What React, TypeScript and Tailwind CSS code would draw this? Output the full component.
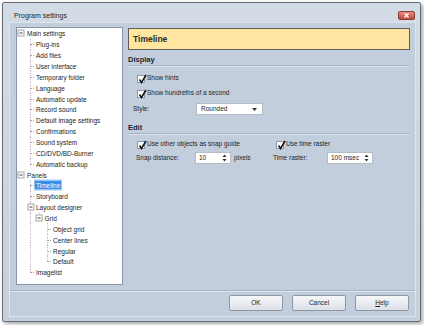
import React from "react";

type Row = { t: string; l: number; exp?: boolean; last?: boolean; sel?: boolean; g?: number[] };

const ROWS: Row[] = [
  { t: "Main settings", l: 0, exp: true },
  { t: "Plug-ins", l: 1 },
  { t: "Add files", l: 1 },
  { t: "User interface", l: 1 },
  { t: "Temporary folder", l: 1 },
  { t: "Language", l: 1 },
  { t: "Automatic update", l: 1 },
  { t: "Record sound", l: 1 },
  { t: "Default image settings", l: 1 },
  { t: "Confirmations", l: 1 },
  { t: "Sound system", l: 1 },
  { t: "CD/DVD/BD-Burner", l: 1 },
  { t: "Automatic backup", l: 1, last: true },
  { t: "Panels", l: 0, exp: true },
  { t: "Timeline", l: 1, sel: true },
  { t: "Storyboard", l: 1 },
  { t: "Layout designer", l: 1, exp: true },
  { t: "Grid", l: 2, exp: true, last: true, g: [1] },
  { t: "Object grid", l: 3, g: [1] },
  { t: "Center lines", l: 3, g: [1] },
  { t: "Regular", l: 3, g: [1] },
  { t: "Default", l: 3, last: true, g: [1] },
  { t: "Imagelist", l: 1, last: true },
];

// x of the guide column for a level, inside the tree box
const colX = (l: number) => (l === 0 ? 3.5 : 13 + (l - 1) * 8.5);

const Expander = ({ x }: { x: number }) => (
  <span
    className="absolute top-1/2 -translate-y-1/2 -translate-x-1/2 w-[7px] h-[7px] bg-white border border-[#a3a3a3] flex items-center justify-center"
    style={{ left: x }}
  >
    <span className="w-[3px] h-px bg-[#444]" />
  </span>
);

const TreeRow = ({ r }: { r: Row }) => {
  const x = colX(r.l);
  return (
    <div className="relative h-[10.86px]">
      {(r.g || []).map((lv) => (
        <span
          key={lv}
          className="absolute top-0 bottom-0 border-l border-dotted border-[#bdbdbd]"
          style={{ left: colX(lv) }}
        />
      ))}
      {r.l > 0 && (
        <>
          <span
            className={`absolute top-0 border-l border-dotted border-[#bdbdbd] ${r.last ? "h-1/2" : "h-full"}`}
            style={{ left: x }}
          />
          <span className="absolute top-1/2 w-[4px] border-t border-dotted border-[#a8a8a8]" style={{ left: x }} />
        </>
      )}
      {r.exp && <Expander x={x + 0.5} />}
      <span
        className={`absolute top-1/2 -translate-y-1/2 whitespace-nowrap px-[1px] leading-[9px] ${
          r.sel ? "bg-[#3a8ee8] text-white outline outline-[#9cc8f5]" : "text-[#1d1d1d]"
        }`}
        style={{ left: r.l === 0 ? 9 : x + 5 }}
      >
        {r.t}
      </span>
    </div>
  );
};

const Check = () => (
  <span className="relative w-[8px] h-[8px] bg-white border border-[#8d98a8] shrink-0">
    <svg className="absolute -top-[2px] left-0" width="9" height="10" viewBox="0 0 9 10">
      <path d="M1.5 5.5 L3.5 8.5 L8 1" fill="none" stroke="#111" strokeWidth="1.5" />
    </svg>
  </span>
);

const CheckRow = ({ label, pl }: { label: string; pl: string }) => (
  <div className={`flex items-center h-[15px] gap-[2px] ${pl}`}>
    <Check />
    <span className="whitespace-nowrap">{label}</span>
  </div>
);

const Spin = ({ value, w }: { value: string; w: string }) => (
  <div className={`${w} h-[12px] bg-white border border-[#b4bcc8] flex items-center justify-between pl-[3px] pr-[3px]`}>
    <span>{value}</span>
    <svg width="5" height="8" viewBox="0 0 5 8">
      <path d="M2.5 0.5 L4.5 3 L0.5 3 Z M0.5 5 L4.5 5 L2.5 7.5 Z" fill="#333" />
    </svg>
  </div>
);

const SectionTitle = ({ text, mt }: { text: string; mt: string }) => (
  <div className={`${mt} h-[11px] border-b border-[#a9b5c6] flex items-center font-bold text-[7.5px] text-[#1b2535] shadow-[0_1px_0_#dbe2ec]`}>
    {text}
  </div>
);

const Btn = ({ children }: { children: React.ReactNode }) => (
  <div className="w-[54px] h-[16px] rounded-[2px] border border-[#8c96a4] bg-gradient-to-b from-[#f6f7f9] to-[#dce1e8] flex items-center justify-center text-[#1d1d1d]">
    {children}
  </div>
);

export default function App() {
  return (
    <div className="w-[424px] h-[325px] bg-white overflow-hidden [font-family:'Liberation_Sans',Arial,sans-serif] text-[6.5px] leading-none text-[#1d1d1d]">
      <div className="ml-[2px] mt-[2px] w-[419px] h-[320px] border border-[#666e7a] rounded-[2px] bg-gradient-to-b from-[#d3dbe6] to-[#c6d0dd] shadow-[2px_2px_4px_rgba(0,0,0,0.35)] flex flex-col">
        {/* Title bar */}
        <div className="h-[19px] pt-[5px] pl-[11px] pr-[5px] flex items-center justify-between">
          <span className="text-[7px] text-[#1f1f1f]">Program settings</span>
          <div className="w-[17px] h-[9px] rounded-[2px] border border-[#8a3b34] bg-gradient-to-b from-[#e88a7f] to-[#c2463a] flex items-center justify-center">
            <svg width="5" height="5" viewBox="0 0 5 5">
              <path d="M0.5 0.5 L4.5 4.5 M4.5 0.5 L0.5 4.5" stroke="#fff" strokeWidth="1.3" />
            </svg>
          </div>
        </div>

        {/* Body */}
        <div className="ml-[6px] mr-[4px] h-[295px] border border-[#dde4ed] bg-[#c3cedc] flex flex-col">
          <div className="pt-[4px] pl-[6px] pr-[5px] flex gap-[5px]">
            {/* Tree */}
            <div className="w-[107px] h-[258px] bg-white border border-[#8894a8]">
              {ROWS.map((r) => (
                <TreeRow key={r.t} r={r} />
              ))}
            </div>

            {/* Right side */}
            <div className="flex-1 flex flex-col">
              <div className="mt-[1px] h-[22px] bg-[#ffe5a0] border border-[#5f5d55] flex items-center pl-[4px] font-bold text-[8.5px] text-[#2a2a2a]">
                Timeline
              </div>

              <SectionTitle text="Display" mt="mt-[5px]" />
              <div className="mt-[5px]">
                <CheckRow label="Show hints" pl="pl-[9px]" />
                <CheckRow label="Show hundreths of a second" pl="pl-[9px]" />
                <div className="h-[16px] flex items-center pl-[5px]">
                  <span className="w-[63px]">Style:</span>
                  <div className="w-[67px] h-[12px] bg-white border border-[#b4bcc8] flex items-center justify-between pl-[4px] pr-[5px]">
                    <span>Rounded</span>
                    <svg width="5" height="3" viewBox="0 0 5 3">
                      <path d="M0 0 L5 0 L2.5 3 Z" fill="#333" />
                    </svg>
                  </div>
                </div>
              </div>

              <SectionTitle text="Edit" mt="mt-[6px]" />
              <div className="mt-[3px] flex">
                <div className="w-[145px]">
                  <CheckRow label="Use other objects as snap guide" pl="pl-[9px]" />
                  <div className="h-[12px] flex items-center pl-[8px]">
                    <span className="w-[59px]">Snap distance:</span>
                    <Spin value="10" w="w-[36px]" />
                    <span className="ml-[3px]">pixels</span>
                  </div>
                </div>
                <div className="flex-1">
                  <CheckRow label="Use time raster" pl="pl-[3px]" />
                  <div className="h-[12px] flex items-center">
                    <span className="w-[54px]">Time raster:</span>
                    <Spin value="100 msec" w="w-[46px]" />
                  </div>
                </div>
              </div>
            </div>
          </div>

          <div className="mt-[5px] h-px bg-[#a8b4c5] shadow-[0_1px_0_#dfe6ef]" />

          <div className="mt-[4px] pr-[6px] flex justify-end gap-[9px]">
            <Btn>OK</Btn>
            <Btn>Cancel</Btn>
            <Btn>
              <span className="underline">H</span>elp
            </Btn>
          </div>
        </div>
      </div>
    </div>
  );
}
